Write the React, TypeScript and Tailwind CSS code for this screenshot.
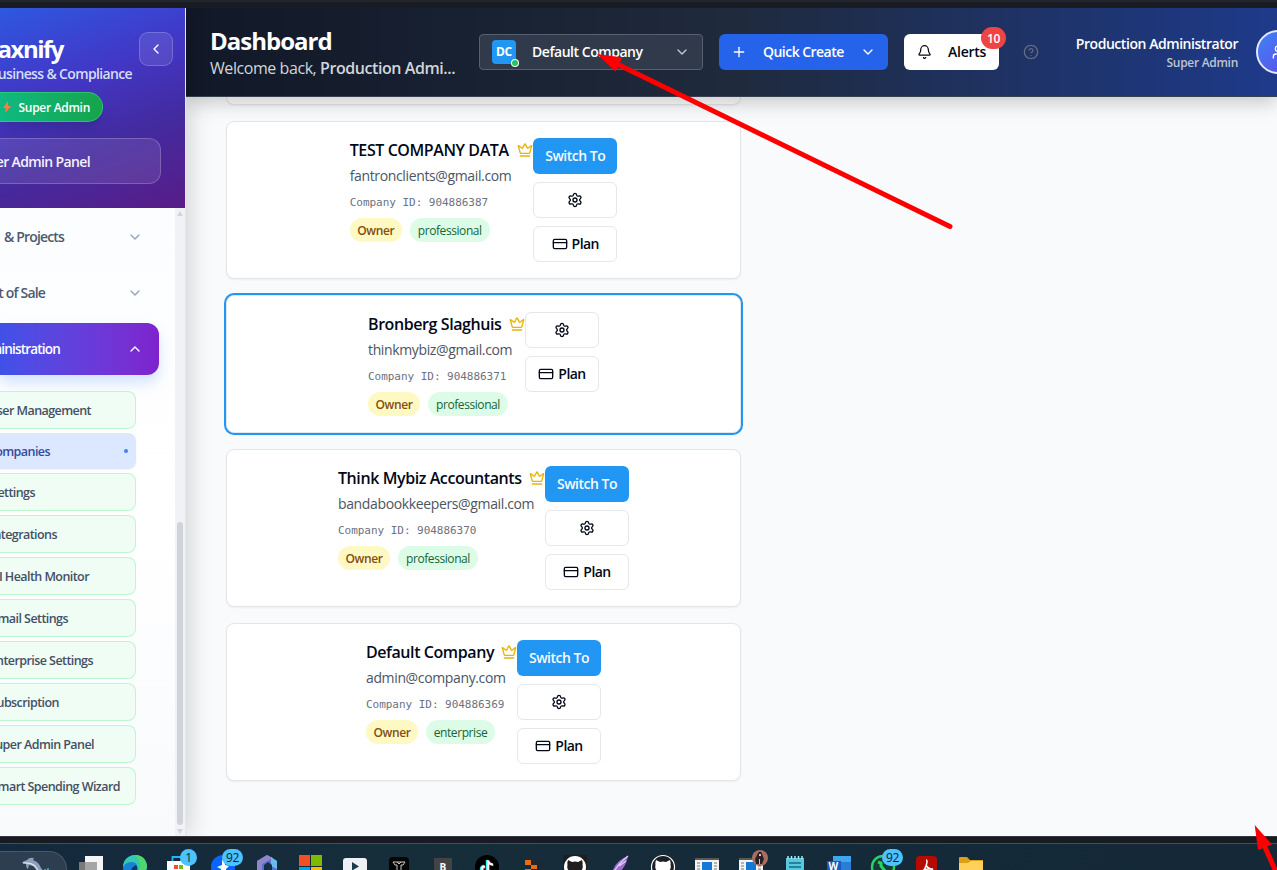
import React from "react";
import {
  Bell,
  ChevronDown,
  ChevronLeft,
  ChevronUp,
  CircleHelp,
  CreditCard,
  Crown,
  Plus,
  Settings,
  User,
} from "lucide-react";

type SubItem = { label: string; pad: string; active?: boolean };

const subItems: SubItem[] = [
  { label: "User Management", pad: "pr-[44px]" },
  { label: "Companies", pad: "pr-[86px]", active: true },
  { label: "Settings", pad: "pr-[100px]" },
  { label: "Integrations", pad: "pr-[78px]" },
  { label: "AI Health Monitor", pad: "pr-[46px]" },
  { label: "Email Settings", pad: "pr-[67px]" },
  { label: "Enterprise Settings", pad: "pr-[42px]" },
  { label: "Subscription", pad: "pr-[76px]" },
  { label: "Super Admin Panel", pad: "pr-[41px]" },
  { label: "Smart Spending Wizard", pad: "pr-[15px]" },
];

type Company = {
  name: string;
  email: string;
  id: string;
  plan: string;
  planWidth: string;
  column: string;
  current?: boolean;
};

const companies: Company[] = [
  { name: "TEST COMPANY DATA", email: "fantronclients@gmail.com", id: "904886387", plan: "professional", planWidth: "w-20", column: "w-[183.5px]" },
  { name: "Bronberg Slaghuis", email: "thinkmybiz@gmail.com", id: "904886371", plan: "professional", planWidth: "w-20", column: "w-[157px]", current: true },
  { name: "Think Mybiz Accountants", email: "bandabookkeepers@gmail.com", id: "904886370", plan: "professional", planWidth: "w-20", column: "w-[207px]" },
  { name: "Default Company", email: "admin@company.com", id: "904886369", plan: "enterprise", planWidth: "w-[69px]", column: "w-[151px]" },
];

function Sidebar() {
  return (
    <aside className="flex w-[186px] shrink-0 flex-col overflow-hidden border-r border-[#e5e7eb] bg-white shadow-[4px_0_22px_rgba(0,0,0,0.16)] relative z-10">
      <div className="flex h-[200px] shrink-0 flex-col bg-[linear-gradient(160deg,#2e58e0_0%,#4237c6_36%,#432ba0_64%,#581c87_100%)] pt-6">
        <div className="flex h-[60px] justify-end">
          <div className="flex w-[132px] shrink-0 flex-col items-end whitespace-nowrap">
            <div className="pt-px pr-[69px] pb-px text-[24px] leading-8 font-bold tracking-[-0.062em] text-white">Taxnify</div>
            <div className="text-[14px] leading-4 font-semibold tracking-[-0.046em] text-[#d3def8]">Business &amp; Compliance</div>
          </div>
          <button className="mr-3 ml-[7px] flex size-[34px] shrink-0 items-center justify-center rounded-[9px] border border-white/20 bg-white/10 text-white">
            <ChevronLeft size={16} />
          </button>
        </div>
        <div className="flex h-[30px] w-[103px] items-center justify-end gap-2 rounded-r-full border border-l-0 border-[#4ade80]/50 bg-linear-to-r from-[#10b981] to-[#16a34a] pr-3 whitespace-nowrap shadow-lg">
          <svg className="h-3 w-2 shrink-0" viewBox="0 0 8 12">
            <path d="M5 0 0 7h3l-1 5 6-7H5z" fill="#ff7a45" />
          </svg>
          <span className="pt-0.5 text-[12px] font-semibold tracking-[-0.025em] text-white">Super Admin</span>
        </div>
        <div className="mt-4 flex h-[46px] w-[161px] items-center justify-end rounded-r-xl border border-l-0 border-white/20 bg-white/10 pr-[70px] text-[14px] font-semibold tracking-[-0.045em] whitespace-nowrap text-[#f4f0ff]">
          Super Admin Panel
        </div>
      </div>
      <div className="flex flex-1">
        <nav className="flex w-[175px] flex-col bg-linear-to-b from-[#fcfdff] via-white to-[#f8fafc] pt-[3px]">
          <div className="mb-1 flex h-[52px] w-[143px] items-center justify-between text-[#4d5a6e]">
            <span className="flex w-16 justify-end pb-0.5 text-[14px] font-semibold tracking-[-0.06em] whitespace-nowrap">&amp; Projects</span>
            <ChevronDown size={16} className="text-[#94a3b8]" />
          </div>
          <div className="mb-1 flex h-[52px] w-[143px] items-center justify-between text-[#4d5a6e]">
            <span className="flex w-[45px] justify-end pb-0.5 text-[14px] font-semibold tracking-[-0.06em] whitespace-nowrap">Point of Sale</span>
            <ChevronDown size={16} className="text-[#94a3b8]" />
          </div>
          <div className="flex h-[52px] w-[159px] items-center justify-between rounded-r-xl bg-linear-to-r from-[#3f51e8] to-[#7e22ce] pr-4 text-white shadow-[0_8px_14px_rgba(59,130,246,0.22)]">
            <span className="flex w-[60px] justify-end text-[13.5px] font-semibold tracking-[-0.06em] whitespace-nowrap">Administration</span>
            <ChevronUp size={16} />
          </div>
          <div className="mt-4 flex w-[136px] flex-col gap-1">
            {subItems.map((s) =>
              s.active ? (
                <div key={s.label} className="flex h-9 items-center justify-end rounded-r-lg bg-[#dbe8ff] pr-2 shadow-xs">
                  <span className="pt-0.5 text-[12.5px] font-semibold tracking-[-0.045em] whitespace-nowrap text-[#334b9e]">{s.label}</span>
                  <span className="ml-[74px] size-1 shrink-0 rounded-full bg-[#3b82f6]" />
                </div>
              ) : (
                <div key={s.label} className={`flex h-[38px] items-center justify-end rounded-r-lg border border-l-0 border-[#bbf7d0] bg-[#f0fdf4] ${s.pad}`}>
                  <span className="pt-0.5 text-[12.5px] font-semibold tracking-[-0.045em] whitespace-nowrap text-[#445064]">{s.label}</span>
                </div>
              ),
            )}
          </div>
        </nav>
        <div className="flex w-[10px] flex-col items-center justify-between bg-[#f1f2f5] pt-[3px] pb-0.5">
          <svg width="6" height="5" viewBox="0 0 6 5"><path d="M3 0 6 5H0z" fill="#d1d5db" /></svg>
          <div className="mt-auto mb-1 h-[303px] w-1.5 rounded-full bg-[#d1d3dc]" />
          <svg width="6" height="5" viewBox="0 0 6 5"><path d="M3 5 6 0H0z" fill="#d1d5db" /></svg>
        </div>
      </div>
    </aside>
  );
}

function Header() {
  return (
    <header className="relative flex h-[89px] shrink-0 border-b border-[#374151] bg-[linear-gradient(90deg,#111827_0%,#1f2a3c_50%,#1e3a8a_100%)] pl-6 shadow-[0_6px_18px_rgba(0,0,0,0.2)]">
      <div className="w-[269px] pt-[17px] whitespace-nowrap">
        <h1 className="text-[24px] leading-8 font-bold tracking-[-0.041em] text-white">Dashboard</h1>
        <p className="text-[16px] leading-[23px] tracking-[-0.027em] text-[#d1d5db]">
          Welcome back, <span className="font-semibold">Production Admi...</span>
        </p>
      </div>
      <div className="flex h-[88px] items-center gap-4 whitespace-nowrap">
        <button className="flex h-9 w-[224px] items-center rounded-[4px] border border-[#566070] bg-[#313a4a] px-3 text-white">
          <span className="relative flex size-6 items-center justify-center rounded bg-[#2196f3] text-[12px] font-bold tracking-[-0.03em]">
            DC
            <span className="absolute -right-0.5 -bottom-0.5 size-1.5 rounded-full bg-[#22c55e] ring-1 ring-white" />
          </span>
          <span className="ml-4 pb-0.5 text-[14px] font-semibold tracking-[-0.033em]">Default Company</span>
          <ChevronDown size={16} className="ml-auto text-[#c3c7ce]" />
        </button>
        <button className="flex h-9 w-[169px] items-center rounded-md bg-[#2563eb] px-3 text-white">
          <Plus size={16} />
          <span className="ml-4 pb-0.5 text-[14px] font-semibold tracking-[-0.038em]">Quick Create</span>
          <ChevronDown size={16} className="ml-auto" />
        </button>
        <button className="relative flex h-9 w-[95px] items-center rounded-md bg-white px-[13px] text-[#020817]">
          <Bell size={16} />
          <span className="ml-4 pb-0.5 text-[14px] font-semibold tracking-[-0.02em]">Alerts</span>
          <span className="absolute -top-[7px] -right-[7px] flex h-[22px] w-[25px] items-center justify-center rounded-full bg-[#ef4444] pt-px text-[12px] font-semibold tracking-[-0.04em] text-white">10</span>
        </button>
      </div>
      <CircleHelp size={16} className="mt-9 ml-6 text-[#626b7f]" />
      <div className="flex flex-1 flex-col items-end pt-[27px] pr-[18px] whitespace-nowrap">
        <span className="text-[14px] leading-[18px] font-semibold tracking-[-0.032em] text-white">Production Administrator</span>
        <span className="text-[12px] leading-[19px] font-semibold tracking-[-0.025em] text-[#bcc4d4]">Super Admin</span>
      </div>
      <div className="w-[21px] overflow-hidden pt-[22px]">
        <div className="flex size-11 items-center justify-center rounded-full border-2 border-[#e4e9f5] bg-linear-to-br from-[#3b82f6] to-[#5b45e8] text-white">
          <User size={16} />
        </div>
      </div>
    </header>
  );
}

function CompanyCard({ c }: { c: Company }) {
  const btn = "flex h-9 items-center justify-center rounded-md border border-[#e5e7eb] bg-white text-[14px] font-semibold tracking-[-0.04em] text-[#020817]";
  return (
    <article className={`flex justify-center rounded-lg border border-[#e2e5ea] bg-white p-4 whitespace-nowrap ${c.current ? "ring-2 ring-[#2196f3]" : "shadow-xs"}`}>
      <div className={`shrink-0 ${c.column}`}>
        <div className="flex h-6 items-center justify-between">
          <span className="text-[16px] font-semibold tracking-[-0.026em] text-[#020817]">{c.name}</span>
          <Crown size={16} className="shrink-0 text-[#eab308]" />
        </div>
        <div className="mt-1 h-5 text-[14px] leading-5 tracking-[-0.026em] text-[#4b5563]">{c.email}</div>
        <div className="mt-2 h-4 font-['DejaVu_Sans_Mono',monospace] text-[11px] leading-[18px] tracking-[-0.003em] text-[#6b7280]">Company ID: {c.id}</div>
        <div className="mt-2 flex h-6 gap-2 text-[12px] tracking-[-0.035em]">
          <span className="flex w-[52px] items-center justify-center rounded-full bg-[#fef9c3] pt-0.5 font-semibold text-[#854d0e]">Owner</span>
          <span className={`flex items-center justify-center rounded-full bg-[#dcfce7] pt-0.5 text-[#166534] ${c.planWidth}`}>{c.plan}</span>
        </div>
      </div>
      <div className={`flex shrink-0 flex-col gap-2 ${c.current ? "w-[74px] pb-6" : "w-[84px]"}`}>
        {!c.current && (
          <button className="flex h-9 items-center justify-center rounded-md bg-[#2196f3] pb-0.5 text-[14px] font-semibold tracking-[-0.035em] text-[#f8fafc]">Switch To</button>
        )}
        <button className={btn}><Settings size={16} /></button>
        <button className={btn}><CreditCard size={16} className="mr-1" /><span className="pb-0.5">Plan</span></button>
      </div>
    </article>
  );
}

const windowIcon = (
  <g>
    <path d="M10 14h24v14H10z" fill="#f3f3f1" />
    <path d="M10 14h24v2H10z" fill="#5b5754" />
    <path d="M12 19h3m-3 3h3m-3 3h3m14-6h3m-3 3h3m-3 3h3" stroke="#777" strokeWidth="1" />
    <path d="M17 18h10v10H17z" fill="#1479d4" />
  </g>
);

const catPath = "M15 16l4 2q3-1 6 0l4-2q1 3 .5 5 1 4-2 6H16.500q-3-2-2-6-.5-2 .5-5z";

const taskIcons: { key: string; art: React.ReactNode; badge?: string }[] = [
  { key: "tasks", art: <g><path d="M16 12h18v18H16z" fill="#f5f5f5" /><path d="M10 18h18v10H10z" fill="#77797b" /><path d="M16 18h12v10H16z" fill="#a5a5a5" /></g> },
  {
    key: "edge",
    art: (
      <g>
        <circle cx="22" cy="23" r="12" fill="#1583d8" />
        <path d="M10 23a12 12 0 0 1 24 0q0 3-4 5H22q5-9-3-10-6 0-9 5z" fill="#35c8b0" />
        <path d="M22 11q11 0 12 12 0 3-4 5h-4q4-9-4-17z" fill="#51d66b" />
        <path d="M18 28q0-5 5-7 3 3 0 7z" fill="#0b3b6b" />
      </g>
    ),
  },
  { key: "store", badge: "1", art: <g><path d="M15.500 18v-5h9v5" fill="none" stroke="#22b7f2" strokeWidth="1.800" /><path d="M10 17h23v11H10z" fill="#fff" /><path d="M17 21h4v4h-4z" fill="#f25022" /><path d="M22 21h4v4h-4z" fill="#7fba00" /></g> },
  { key: "messages", badge: "92", art: <g><circle cx="22" cy="23" r="12" fill="#0866ff" /><path d="M21 16h3v5l4 1-3 3v3h-5v-3l-4-2 5-2z" fill="#fff" /></g> },
  {
    key: "copilot",
    art: (
      <g>
        <path d="M22 11l10 6v11H12V17z" fill="#586fd0" />
        <path d="M22 11l-10 6v11h5v-8l11-6z" fill="#8f86c8" />
        <path d="M26 13l6 4v8l-6-3z" fill="#6ab9e8" />
        <path d="M23 18l4 3v7h-8v-7z" fill="#172e48" />
      </g>
    ),
  },
  { key: "microsoft", art: <g><path d="M10 11h11v11H10z" fill="#f25022" /><path d="M22 11h11v11H22z" fill="#7fba00" /><path d="M10 23h11v5H10z" fill="#00a4ef" /><path d="M22 23h11v5H22z" fill="#ffb900" /></g> },
  { key: "video", art: <g><rect x="10" y="14" width="24" height="16" rx="3" fill="#eef1f3" /><path d="M19 18l7 4.500-7 4z" fill="#1d3a4b" /></g> },
  { key: "column", art: <g><rect x="12" y="13" width="20" height="18" rx="4" fill="#050505" /><path d="M16 18h12l-2 3h-2v7m-4 0v-7h-2l-2-3m4 0 2 2 2-2" fill="none" stroke="#c9c9c9" strokeWidth="1" /></g> },
  { key: "b", art: <g><rect x="13" y="14" width="18" height="14" rx="1" fill="#434343" /><text x="18.500" y="27" fontSize="10" fontWeight="700" fill="#fff">B</text></g> },
  {
    key: "tiktok",
    art: (
      <g>
        <circle cx="22" cy="23" r="12" fill="#000" />
        <path d="M22 16v9a3 3 0 1 1-3-3m3-6q1 4 5 4" fill="none" stroke="#25f4ee" strokeWidth="2.400" />
        <path d="M23.500 17v9a3 3 0 1 1-3-3m3-6q1 4 5 4" fill="none" stroke="#fe2c55" strokeWidth="2.400" />
        <path d="M23 16.500v9a3 3 0 1 1-3-3m3-6q1 4 5 4" fill="none" stroke="#fff" strokeWidth="2.200" />
      </g>
    ),
  },
  { key: "blocks", art: <g><path d="M22 15h12v13H22z" fill="#1c2836" /><path d="M16 16h6v5h-6zM22 21h6v4h-6zM16 25h6v3h-6z" fill="#f26a0a" /></g> },
  { key: "github", art: <g><path d="M10 11h24v17H10z" fill="#201d1e" /><circle cx="22" cy="23" r="11" fill="#fff" /><path d={catPath} fill="#201d1e" /></g> },
  { key: "feather", art: <g><path d="M31 12q-12 4-16 16h8q6-6 8-16z" fill="#9b6bd0" /><path d="M31 12q-10 8-14 16M29 17l-7 5" stroke="#e2caf6" strokeWidth="1.400" fill="none" /></g> },
  { key: "desktop", art: <g><circle cx="22" cy="23" r="11.500" fill="#1c2025" stroke="#fff" strokeWidth="1.200" /><path d={catPath} fill="#fff" /></g> },
  { key: "app", art: windowIcon },
  {
    key: "app-user",
    art: (
      <g>
        {windowIcon}
        <circle cx="31" cy="14" r="8" fill="#a86f60" />
        <path d="M29 9q3-3 4 1l2 5-2 5h-6l-1-5z" fill="#2b2025" />
        <path d="M30 10h2v2h-2zM30 15h1v5h-1z" fill="#dfc1b0" />
      </g>
    ),
  },
  { key: "notes", art: <g><path d="M13 14h18v14H13z" fill="#57c8de" /><path d="M15 12v3m3.500-3v3m3.500-3v3m3.500-3v3m3.500-3v3" stroke="#a5eaf5" strokeWidth="1.500" /><path d="M16 19h12m-12 4h12" stroke="#176b85" strokeWidth="1.500" /></g> },
  { key: "word", art: <g><path d="M16 12h18v16H16z" fill="#2b7cd3" /><path d="M16 12h18v6H16z" fill="#41a5ee" /><path d="M10 17h14v11H10z" fill="#185abd" /><text x="11.500" y="26" fontSize="10" fontWeight="700" fill="#fff">W</text></g> },
  { key: "whatsapp", badge: "92", art: <g><circle cx="22" cy="23" r="11" fill="#173c39" stroke="#25d366" strokeWidth="2.400" /><path d="M17 18l3 1v3l4 5" fill="none" stroke="#25d366" strokeWidth="3" /></g> },
  { key: "acrobat", art: <g><rect x="11" y="12" width="21" height="20" rx="3.500" fill="#b30b00" /><path d="M21 16q2 0 0 6-2 5-4 5m4-6q3 5 7 4-6-1-11 2" fill="none" stroke="#fff" strokeWidth="1.500" /></g> },
  { key: "folder", art: <g><path d="M10 14q0-1 1-1h7l3 3h13v4H10z" fill="#dd9f16" /><path d="M10 19h9l3-2h12v11H10z" fill="#ffd05a" /></g> },
];

function Taskbar() {
  return (
    <footer className="h-[34px] shrink-0 overflow-hidden">
      <div className="h-2 border-t border-b border-t-[#343640] border-b-[#484c54] bg-[#191b23]" />
      <div className="flex h-[26px] bg-[linear-gradient(90deg,#14293d,#162d3a_30%,#142837)]">
        <div className="mt-[7px] flex h-9 w-[67px] shrink-0 rounded-tr-[18px] border-t border-r border-[#46586a] bg-[#2d3e50] pl-[21px]">
          <svg className="mt-[5px] shrink-0" width="32" height="15" viewBox="0 0 32 15">
            <path d="M1 6q1-2 5-3 2-3 7-2l-1 2q6 2 8 8l3 4h-6l-5-6-4-1-1 4q-2-1-2-5z" fill="#8e9db9" />
            <path d="M2 6q7-1 12 3l3 4" stroke="#dce5ef" strokeWidth="1.200" fill="none" />
            <path d="M24 15v-3m3 3v-4m3 4v-2" stroke="#65c6db" strokeWidth="1.200" />
          </svg>
        </div>
        <div className="ml-0.5 flex">
          {taskIcons.map((t) => (
            <div key={t.key} className="relative w-11 shrink-0">
              <svg width="44" height="26" viewBox="0 0 44 26">{t.art}</svg>
              {t.badge && (
                <span className={`absolute top-[5px] flex h-[17px] items-center justify-center rounded-full bg-[#4cc2ff] pt-px text-[12px] tracking-[-0.04em] text-[#0b1c28] ${t.badge === "1" ? "left-[23px] w-[17px]" : "left-[21px] w-[21px]"}`}>
                  {t.badge}
                </span>
              )}
            </div>
          ))}
        </div>
      </div>
    </footer>
  );
}

export default function App() {
  return (
    <div className="relative flex h-[870px] w-[1277px] flex-col overflow-hidden bg-[#f9fafc] font-['Open_Sans','Noto_Sans',sans-serif]">
      <div className="h-2 shrink-0 border-t-2 border-[#22252e] bg-[#191c23]" />
      <div className="flex h-[828px] shrink-0 overflow-hidden">
        <Sidebar />
        <div className="flex w-[1091px] flex-col">
          <Header />
          <main className="flex w-[555px] flex-col gap-4 px-10">
            <div className="h-2 w-[515px] rounded-b-lg border border-t-0 border-[#e2e5ea] bg-white/60 shadow-xs" />
            <div className="flex w-[515px] flex-col gap-4">
              {companies.map((c) => (
                <CompanyCard key={c.id} c={c} />
              ))}
            </div>
          </main>
        </div>
      </div>
      <Taskbar />
      <svg className="pointer-events-none absolute inset-0 z-20" width="1277" height="870" viewBox="0 0 1277 870">
        <path d="M615 63 950 226.500M1264 845 1277 874" stroke="#ff0000" strokeWidth="5" strokeLinecap="round" />
        <path d="M597 54 622.500 57.500 615.500 71.500zM1254.700 825 1272 844.500 1258 850z" fill="#ff0000" />
      </svg>
    </div>
  );
}
